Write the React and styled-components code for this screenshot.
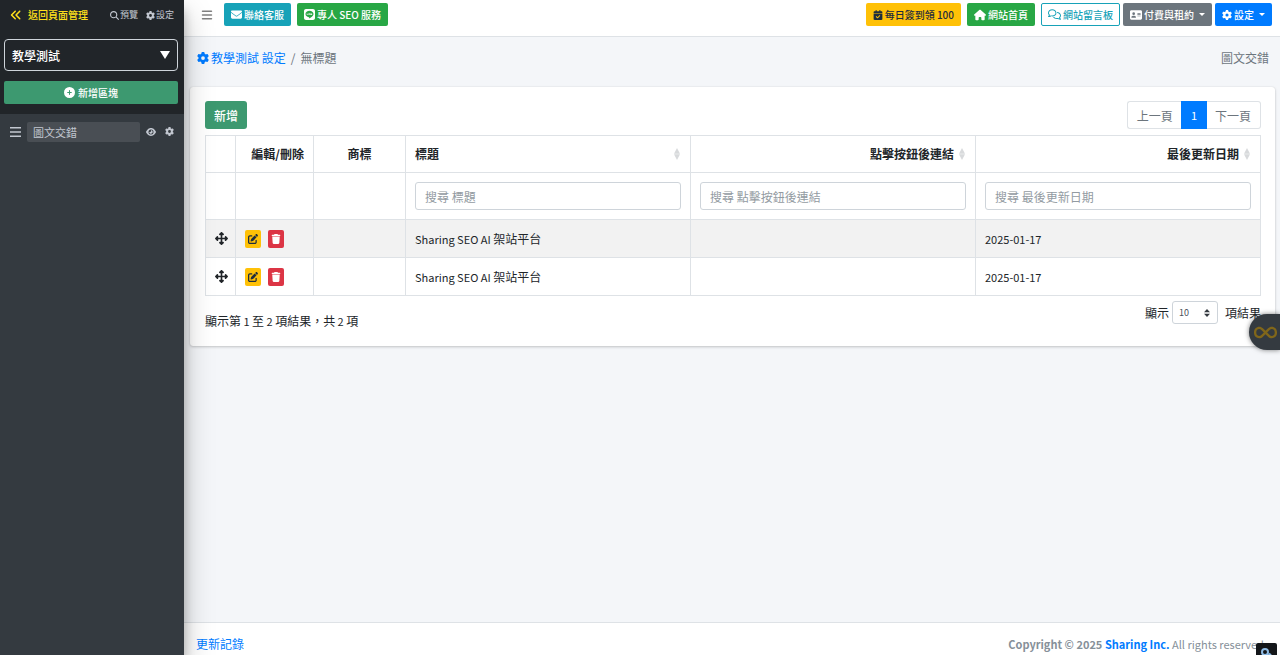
import React from "react";
import styled, { createGlobalStyle, css } from "styled-components";
import {
  FaAnglesLeft, FaMagnifyingGlass, FaGear, FaCirclePlus, FaBars, FaEye, FaEnvelope, FaLine,
  FaCalendarCheck, FaHouse, FaRegComments, FaAddressCard, FaUpDownLeftRight,
  FaPenToSquare, FaTrash, FaInfinity,
} from "react-icons/fa6";

const Global = createGlobalStyle`
  *, *::before, *::after { box-sizing: border-box; }
  body {
    margin: 0;
    background: #f4f6f9;
    color: #212529;
    font: 12px/18px "Noto Sans CJK TC", "Noto Sans", sans-serif;
  }
  button, input, select { font-family: inherit; margin: 0; }
  button { cursor: pointer; }
  a { color: #007bff; text-decoration: none; }
  svg { display: block; flex: none; }
`;

const Page = styled.div`
  display: flex;
  min-height: 100vh;
`;

const Sidebar = styled.aside`
  flex: 0 0 184px;
  min-width: 0;
  z-index: 2;
  background: #343a40;
  box-shadow: 0 14px 28px rgba(0, 0, 0, 0.25), 0 10px 10px rgba(0, 0, 0, 0.22);
`;

const SidebarHead = styled.div`
  display: flex;
  flex-direction: column;
  padding: 6px 6px 10px 4px;
  background: #212529;
`;

const SidebarLinks = styled.nav`
  display: flex;
  align-items: center;
  gap: 8px;
  height: 18px;
  padding: 0 4px 0 6px;
`;

const SideLink = styled.a`
  display: flex;
  align-items: center;
  gap: 1px;
  color: #c2c7d0;
  font-size: 9px;
`;

const BackLink = styled(SideLink)`
  flex: 1;
  gap: 6px;
  color: #ffe01b;
  font-size: 10px;
  font-weight: 500;
`;

const SelectWrap = styled.span`
  display: inline-block;
  position: relative;
  svg {
    position: absolute;
    top: 50%;
    right: 8px;
    transform: translateY(-50%);
    pointer-events: none;
  }
`;

const PageSelectWrap = styled(SelectWrap)`
  display: block;
  margin: 15px 0 10px;
`;

const PageSelect = styled.select`
  appearance: none;
  display: block;
  width: 100%;
  height: 32px;
  padding: 0 24px 0 7px;
  border: 1px solid #ced4da;
  border-radius: 4px;
  background: #212529;
  color: #fff;
  font-size: 12px;
  font-weight: 500;
`;

const AddBlock = styled.button`
  display: flex;
  align-items: center;
  justify-content: center;
  gap: 3px;
  height: 23px;
  border: 0;
  border-radius: 2px;
  background: #3d9970;
  color: #fff;
  font-size: 10px;
  font-weight: 500;
`;

const BlockRow = styled.div`
  display: flex;
  align-items: center;
  gap: 6px;
  padding: 8px 10px;
  color: #c2c7d0;
`;

const BlockName = styled.input`
  flex: 1;
  min-width: 0;
  height: 20px;
  padding: 0 6px;
  border: 0;
  border-radius: 2px;
  background: #494e54;
  color: #c2c7d0;
  font-size: 11px;
`;

const IconButton = styled.button`
  display: flex;
  padding: 0;
  border: 0;
  background: none;
  color: inherit;
`;

const BlockTools = styled.div`
  display: flex;
  gap: 9px;
`;

const Main = styled.div`
  display: flex;
  flex: 1;
  flex-direction: column;
  min-width: 0;
`;

const Navbar = styled.header`
  display: flex;
  align-items: center;
  justify-content: space-between;
  height: 37px;
  padding: 0 8px 7px 17px;
  border-bottom: 1px solid #dee2e6;
  background: #fff;
  color: #808080;
`;

const NavGroup = styled.div`
  display: flex;
  align-items: center;
  gap: ${(p) => p.$gap}px;
`;

const tones = {
  info: css`background: #17a2b8; color: #fff;`,
  success: css`background: #28a745; color: #fff;`,
  warning: css`background: #ffc107; color: #1f2d3d;`,
  outline: css`background: #fff; color: #17a2b8; border-color: #17a2b8;`,
  secondary: css`background: #6c757d; color: #fff;`,
  primary: css`background: #007bff; color: #fff;`,
};

const NavButton = styled.button`
  display: flex;
  align-items: center;
  gap: 2px;
  height: 23px;
  padding: 0 6px;
  border: 1px solid transparent;
  border-radius: 2px;
  font-size: 10px;
  font-weight: 500;
  white-space: nowrap;
  ${(p) => tones[p.$tone]}
`;

const Caret = styled.span`
  margin-left: 3px;
  border: 3px solid transparent;
  border-top-color: currentColor;
  border-bottom: 0;
`;

const ContentHead = styled.div`
  display: flex;
  align-items: center;
  justify-content: space-between;
  padding: 12px 11px 20px 13px;
  color: #6c757d;
`;

const Breadcrumb = styled.nav`
  display: flex;
  gap: 5px;
  a { display: flex; align-items: center; gap: 2px; }
`;

const Card = styled.main`
  margin: 0 5px 0 6px;
  padding: 14px 14px 16px 15px;
  border-radius: 3px;
  background: #fff;
  box-shadow: 0 0 1px rgba(0, 0, 0, 0.13), 0 1px 3px rgba(0, 0, 0, 0.2);
`;

const Bar = styled.div`
  display: flex;
  justify-content: space-between;
`;

const AddButton = styled.button`
  height: 28px;
  padding: 0 9px;
  border: 0;
  border-radius: 3px;
  background: #3d9970;
  color: #fff;
  font-size: 12px;
  font-weight: 500;
`;

const Pager = styled.nav`
  display: flex;
`;

const PageButton = styled.button`
  height: 28px;
  padding: 0 9px;
  border: 1px solid ${(p) => (p.$active ? "#007bff" : "#dee2e6")};
  background: ${(p) => (p.$active ? "#007bff" : "#fff")};
  color: ${(p) => (p.$active ? "#fff" : "#6c757d")};
  font-size: ${(p) => (p.$active ? 11 : 12)}px;
  &:first-child { padding-right: 8px; border-right: 0; border-radius: 3px 0 0 3px; }
  &:last-child { padding-left: 8px; border-left: 0; border-radius: 0 3px 3px 0; }
`;

const Table = styled.table`
  width: 100%;
  margin: 6px 0 5px;
  border-collapse: collapse;
  table-layout: fixed;
`;

const Col = styled.col`
  width: ${(p) => (p.$w ? `${p.$w}px` : "auto")};
`;

const Th = styled.th`
  height: 37px;
  padding: 0 9px;
  border: 1px solid #dee2e6;
  text-align: ${(p) => p.$align || "left"};
  font-weight: 700;
`;

const SortHead = styled.div`
  display: flex;
  align-items: center;
  justify-content: ${(p) => (p.$end ? "flex-end" : "space-between")};
  gap: 5px;
  padding-right: 1px;
`;

const FilterCell = styled.td`
  height: 47px;
  padding: 0 9px;
  border: 1px solid #dee2e6;
`;

const FilterInput = styled.input`
  display: block;
  width: 100%;
  height: 28px;
  padding: 0 9px;
  border: 1px solid #ced4da;
  border-radius: 3px;
  background: #fff;
  font-size: 12px;
  &::placeholder { color: #939ba2; opacity: 1; }
`;

const Row = styled.tr`
  background: ${(p) => (p.$odd ? "#f2f2f2" : "#fff")};
`;

const Td = styled.td`
  height: 38px;
  padding: 0 9px;
  border: 1px solid #dee2e6;
`;

const Latin = styled.span`
  font-size: 11px;
`;

const Actions = styled.div`
  display: flex;
  gap: 7px;
`;

const ActionButton = styled.button`
  display: flex;
  align-items: center;
  justify-content: center;
  width: 16px;
  height: 18px;
  padding: 0;
  border: 0;
  border-radius: 2px;
  ${(p) => (p.$danger ? css`background: #dc3545; color: #fff;` : css`background: #ffc107; color: #1f2d3d;`)}
`;

const Info = styled.div`
  padding-top: 11px;
`;

const Length = styled.label`
  display: flex;
  align-items: center;
  height: 23px;
  gap: 3px;
`;

const LengthWrap = styled(SelectWrap)`
  margin-right: 4px;
`;

const LengthSelect = styled.select`
  appearance: none;
  display: block;
  width: 46px;
  height: 23px;
  padding: 0 16px 0 6px;
  border: 1px solid #ced4da;
  border-radius: 3px;
  background: #fff;
  color: #495057;
  font-size: 9px;
`;

const Footer = styled.footer`
  display: flex;
  justify-content: space-between;
  margin-top: auto;
  padding: 12px 13px 2px 12px;
  border-top: 1px solid #dee2e6;
  background: #fff;
  color: #869099;
`;

const Copyright = styled.span`
  font-size: 11px;
`;

const Bubble = styled.button`
  position: fixed;
  z-index: 3;
  top: 314px;
  right: 0;
  display: flex;
  align-items: center;
  width: 31px;
  height: 36px;
  padding: 0 0 0 5px;
  border: 0;
  border-radius: 18px 0 0 18px;
  background: #343a40;
  color: #80661a;
  box-shadow: 0 0 5px rgba(0, 0, 0, 0.5);
`;

const CornerBadge = styled.button`
  position: fixed;
  z-index: 3;
  right: 3px;
  bottom: -8px;
  display: flex;
  justify-content: center;
  width: 21px;
  height: 20px;
  padding: 5px 0 0;
  border: 0;
  border-radius: 2px;
  background: #14171a;
  color: #8fbce6;
`;

function SortIcon() {
  return (
    <svg width="6" height="12" viewBox="0 0 6 12" fill="#d8dadc" aria-hidden="true">
      <path d="M3 0 6 5.7H0ZM0 6.3H6L3 12Z" />
    </svg>
  );
}

const rows = [
  { latin: "Sharing SEO AI", title: "架站平台", date: "2025-01-17" },
  { latin: "Sharing SEO AI", title: "架站平台", date: "2025-01-17" },
];

export default function App() {
  return (
    <>
      <Global />
      <Page>
        <Sidebar>
          <SidebarHead>
            <SidebarLinks>
              <BackLink href="#"><FaAnglesLeft size={12} />返回頁面管理</BackLink>
              <SideLink href="#"><FaMagnifyingGlass size={9} />預覽</SideLink>
              <SideLink href="#"><FaGear size={9} />設定</SideLink>
            </SidebarLinks>
            <PageSelectWrap>
              <PageSelect aria-label="頁面"><option>教學測試</option></PageSelect>
              <svg width="10" height="8" viewBox="0 0 10 8" fill="#fff" aria-hidden="true"><path d="M0 0H10L5 8Z" /></svg>
            </PageSelectWrap>
            <AddBlock><FaCirclePlus size={11} />新增區塊</AddBlock>
          </SidebarHead>
          <BlockRow>
            <IconButton aria-label="排序">
              <svg width="11" height="12" viewBox="0 0 11 12" stroke="currentColor" strokeWidth="1.4" aria-hidden="true">
                <path d="M0 1.7H11M0 6H11M0 10.3H11" />
              </svg>
            </IconButton>
            <BlockName aria-label="區塊名稱" defaultValue="圖文交錯" />
            <BlockTools>
              <IconButton aria-label="顯示"><FaEye size={10} /></IconButton>
              <IconButton aria-label="設定"><FaGear size={9} /></IconButton>
            </BlockTools>
          </BlockRow>
        </Sidebar>
        <Main>
          <Navbar>
            <NavGroup $gap={11}>
              <IconButton aria-label="選單"><FaBars size={12} /></IconButton>
              <NavGroup $gap={6}>
                <NavButton $tone="info"><FaEnvelope size={11} />聯絡客服</NavButton>
                <NavButton $tone="success"><FaLine size={11} />專人 SEO 服務</NavButton>
              </NavGroup>
            </NavGroup>
            <NavGroup $gap={6}>
              <NavButton $tone="warning"><FaCalendarCheck size={10} />每日簽到領 100</NavButton>
              <NavButton $tone="success"><FaHouse size={12} />網站首頁</NavButton>
              <NavGroup $gap={3}>
                <NavButton $tone="outline"><FaRegComments size={13} />網站留言板</NavButton>
                <NavButton $tone="secondary"><FaAddressCard size={12} />付費與租約<Caret /></NavButton>
                <NavButton $tone="primary"><FaGear size={10} />設定<Caret /></NavButton>
              </NavGroup>
            </NavGroup>
          </Navbar>
          <ContentHead>
            <Breadcrumb>
              <a href="#"><FaGear size={12} />教學測試 設定</a>
              <span>/</span>
              <span>無標題</span>
            </Breadcrumb>
            <span>圖文交錯</span>
          </ContentHead>
          <Card>
            <Bar>
              <AddButton>新增</AddButton>
              <Pager>
                <PageButton>上一頁</PageButton>
                <PageButton $active>1</PageButton>
                <PageButton>下一頁</PageButton>
              </Pager>
            </Bar>
            <Table>
              <colgroup><Col $w={30} /><Col $w={78} /><Col $w={92} /><Col /><Col /><Col /></colgroup>
              <thead>
                <tr>
                  <Th />
                  <Th $align="right">編輯/刪除</Th>
                  <Th $align="center">商標</Th>
                  <Th><SortHead>標題<SortIcon /></SortHead></Th>
                  <Th><SortHead $end>點擊按鈕後連結<SortIcon /></SortHead></Th>
                  <Th><SortHead $end>最後更新日期<SortIcon /></SortHead></Th>
                </tr>
                <tr>
                  <FilterCell /><FilterCell /><FilterCell />
                  {["標題", "點擊按鈕後連結", "最後更新日期"].map((name) => (
                    <FilterCell key={name}>
                      <FilterInput aria-label={`搜尋 ${name}`} placeholder={`搜尋 ${name}`} />
                    </FilterCell>
                  ))}
                </tr>
              </thead>
              <tbody>
                {rows.map((row, i) => (
                  <Row key={i} $odd={i % 2 === 0}>
                    <Td><FaUpDownLeftRight size={13} /></Td>
                    <Td>
                      <Actions>
                        <ActionButton aria-label="編輯"><FaPenToSquare size={10} /></ActionButton>
                        <ActionButton $danger aria-label="刪除"><FaTrash size={10} /></ActionButton>
                      </Actions>
                    </Td>
                    <Td />
                    <Td><Latin>{row.latin} </Latin>{row.title}</Td>
                    <Td />
                    <Td><Latin>{row.date}</Latin></Td>
                  </Row>
                ))}
              </tbody>
            </Table>
            <Bar>
              <Info>顯示第<Latin> 1 </Latin>至<Latin> 2 </Latin>項結果，共<Latin> 2 </Latin>項</Info>
              <Length>
                顯示
                <LengthWrap>
                  <LengthSelect><option>10</option></LengthSelect>
                  <svg width="6" height="8" viewBox="0 0 6 8" fill="#343a40" aria-hidden="true"><path d="M3 0 6 3.3H0ZM0 4.7H6L3 8Z" /></svg>
                </LengthWrap>
                項結果
              </Length>
            </Bar>
          </Card>
          <Footer>
            <a href="#">更新記錄</a>
            <Copyright><b>Copyright © 2025 <a href="#">Sharing Inc.</a></b> All rights reserved.</Copyright>
          </Footer>
        </Main>
      </Page>
      <Bubble aria-label="工具"><FaInfinity size={23} /></Bubble>
      <CornerBadge aria-label="工具">
        <svg width="14" height="14" viewBox="0 0 14 14" fill="none" stroke="currentColor" strokeWidth="2" aria-hidden="true">
          <circle cx="5" cy="4" r="3" />
          <path d="M7 6.5 12 11M9 5.5l2 2M3 9l2 1" />
        </svg>
      </CornerBadge>
    </>
  );
}
